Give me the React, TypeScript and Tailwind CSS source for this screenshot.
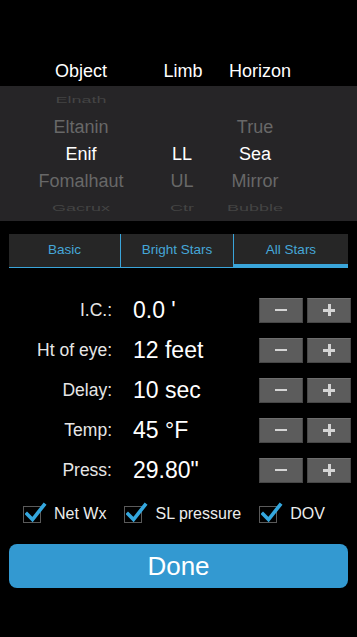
import React from "react";

const font = { fontFamily: '"Liberation Sans", Arial, sans-serif' };

function Squished({ text }: { text: string }) {
  return (
    <div className="h-[27px] flex items-center justify-center overflow-hidden">
      <span className="text-[18px] leading-[22px] text-[#444444] scale-y-[0.5] inline-block">{text}</span>
    </div>
  );
}

function Item({ text, active }: { text: string; active?: boolean }) {
  return (
    <div className="h-[27px] flex items-center justify-center">
      <span className={`text-[18px] leading-[22px] ${active ? "text-white" : "text-[#686868]"}`}>{text}</span>
    </div>
  );
}

function Column({ items, w }: { items: string[]; w: string }) {
  return (
    <div className={`flex flex-col ${w}`}>
      <Squished text={items[0]} />
      <Item text={items[1]} />
      <Item text={items[2]} active />
      <Item text={items[3]} />
      <Squished text={items[4]} />
    </div>
  );
}

function StepButton({ plus }: { plus?: boolean }) {
  return (
    <div className="w-[44px] h-[25px] bg-[#5c5c5c] border border-[#474747] border-t-[#6e6e6e] flex items-center justify-center">
      {plus ? (
        <div className="relative w-[12px] h-[12px]">
          <div className="absolute left-0 top-[5px] w-[12px] h-[2.5px] bg-[#d4d4d4]" />
          <div className="absolute left-[5px] top-0 w-[2.5px] h-[12px] bg-[#d4d4d4]" />
        </div>
      ) : (
        <div className="w-[12px] h-[2.5px] bg-[#d4d4d4]" />
      )}
    </div>
  );
}

function Row({ label, value }: { label: string; value: string }) {
  return (
    <div className="h-[40px] flex items-center">
      <div className="w-[112px] text-right text-[17.5px] text-[#e6e6e6]">{label}</div>
      <div className="ml-[21px] flex-1 text-[23px] text-white">{value}</div>
      <div className="flex gap-[4px] mr-[6px]">
        <StepButton />
        <StepButton plus />
      </div>
    </div>
  );
}

function Check({ label, className }: { label: string; className?: string }) {
  return (
    <div className={`flex items-center ${className ?? ""}`}>
      <div className="relative w-[18px] h-[17px] border border-[#5a5a5a]">
        <svg className="absolute left-[1px] top-[-5px]" width="22" height="22" viewBox="0 0 22 22">
          <path d="M2 12 L7.5 17.5 L19 3" fill="none" stroke="#34a7de" strokeWidth="3.6" strokeLinecap="square" />
        </svg>
      </div>
      <span className="ml-[13px] text-[16px] text-[#ececec]">{label}</span>
    </div>
  );
}

export default function App() {
  return (
    <div className="w-[357px] h-[637px] bg-black overflow-hidden" style={font}>
      {/* header */}
      <div className="h-[86px] pt-[60px] flex text-[18px] leading-[22px] text-white">
        <div className="ml-[21px] w-[120px] text-center">Object</div>
        <div className="ml-[11px] w-[62px] text-center">Limb</div>
        <div className="ml-[6px] w-[80px] text-center">Horizon</div>
      </div>
      {/* picker */}
      <div className="h-[135px] bg-[#262527] flex overflow-hidden">
        <Column w="ml-[21px] w-[120px]" items={["Elnath", "Eltanin", "Enif", "Fomalhaut", "Gacrux"]} />
        <Column w="ml-[11px] w-[60px]" items={["", "", "LL", "UL", "Ctr"]} />
        <Column w="ml-[3px] w-[80px]" items={["", "True", "Sea", "Mirror", "Bubble"]} />
      </div>
      {/* tabs */}
      <div className="mt-[13px] mx-[9px] h-[34px] flex bg-[#262626] text-[13.5px] text-[#45a6d8]">
        <div className="w-[112px] flex items-center justify-center border-b border-[#3aa5da] border-r">Basic</div>
        <div className="w-[113px] flex items-center justify-center border-b border-[#3aa5da] border-r">Bright Stars</div>
        <div className="flex-1 flex items-center justify-center border-b-4 border-[#3aa5da] pt-[3px]">All Stars</div>
      </div>
      {/* rows */}
      <div className="mt-[22px]">
        <Row label="I.C.:" value="0.0 '" />
        <Row label="Ht of eye:" value="12 feet" />
        <Row label="Delay:" value="10 sec" />
        <Row label="Temp:" value="45 °F" />
        <Row label="Press:" value={'29.80"'} />
      </div>
      {/* checkboxes */}
      <div className="mt-[12px] h-[24px] flex items-center">
        <Check label="Net Wx" className="ml-[23px]" />
        <Check label="SL pressure" className="ml-[18px]" />
        <Check label="DOV" className="ml-[18px]" />
      </div>
      {/* done */}
      <div className="mt-[18px] mx-[9px] h-[44px] rounded-[8px] bg-[#3399d1] flex items-center justify-center text-[26px] text-white">
        Done
      </div>
    </div>
  );
}
